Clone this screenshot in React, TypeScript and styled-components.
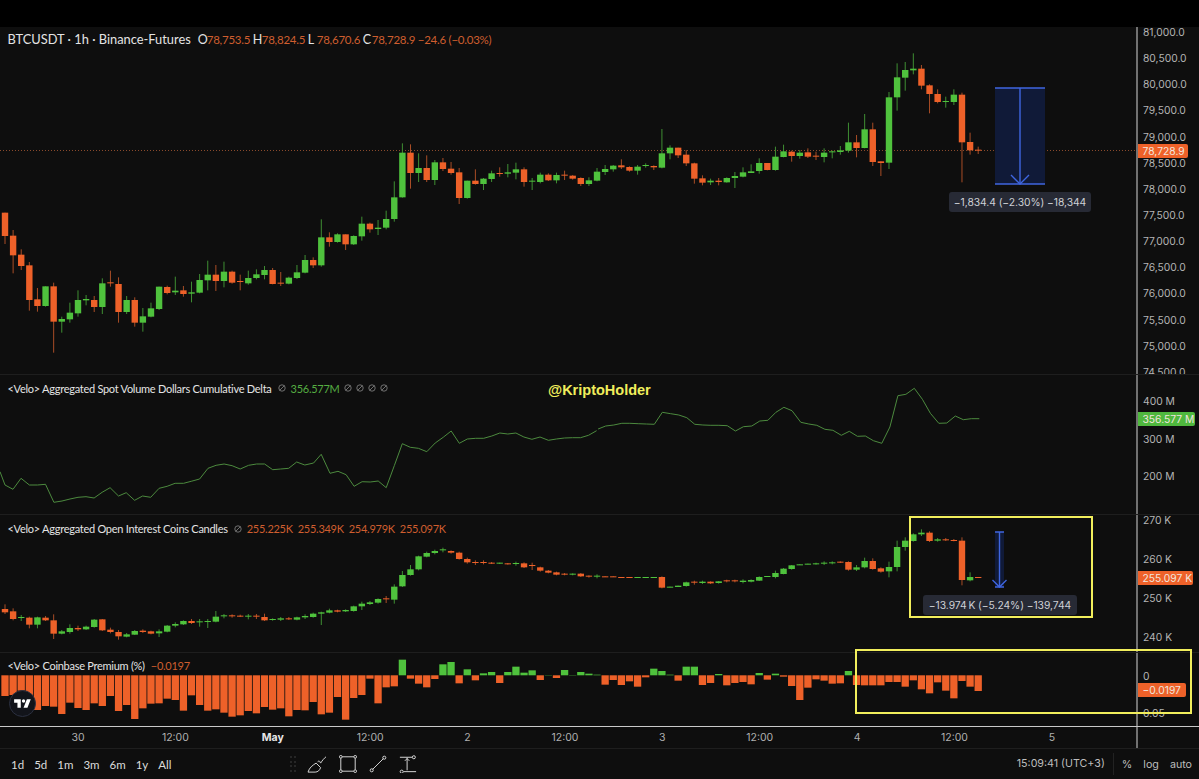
import React from 'react';
import styled, { createGlobalStyle } from 'styled-components';

const UP = '#4fc23d';
const DOWN = '#ee6129';
const UP_WICK = '#3f8f33';
const DOWN_WICK = '#a94d26';
const BLUE = '#3f66e0';
const YELLOW = '#f1ee5c';
const STEP = 8.11;
const FIRST_X = 5;

type Row = [number, number, number, number?, number?];
type Candle = { up: boolean; top: number; bottom: number; high: number; low: number };

// rows are [up, bodyTop, bodyBottom, wickTop, wickBottom] traced at 3x from `base`
const trace = (rows: Row[], base: number): Candle[] =>
    rows.map(([up, top, bottom, high = top, low = bottom]) => ({
        up: up === 1,
        top: base + top / 3,
        bottom: base + bottom / 3,
        high: base + high / 3,
        low: base + low / 3,
    }));

const priceCandles = [
    ...trace(
        [
            [0, 638, 708, 638, 732], [0, 707, 766, 690, 820], [0, 764, 798, 748, 810], [0, 796, 900, 786, 932],
            [0, 898, 918, 864, 935], [1, 859, 918, 859, 920], [0, 859, 965, 848, 1058], [1, 957, 965, 950, 998],
            [1, 938, 958, 908, 968], [1, 900, 940, 871, 950], [1, 897, 901, 885, 916], [0, 900, 921, 888, 936],
            [1, 850, 921, 835, 942], [0, 847, 850, 812, 860], [0, 852, 936, 832, 968], [1, 900, 936, 888, 942],
            [0, 900, 968, 892, 980], [1, 949, 968, 924, 995], [1, 925, 950, 908, 952], [1, 860, 927, 860, 930],
            [0, 861, 879, 857, 883], [1, 872, 877, 830, 885], [0, 871, 882, 858, 890], [1, 877, 881, 845, 907],
            [1, 840, 878, 822, 880], [1, 824, 841, 782, 871], [0, 824, 843, 795, 873], [1, 815, 843, 785, 862],
            [0, 815, 848, 812, 851], [0, 843, 845, 824, 871], [1, 834, 850, 812, 854], [1, 823, 834, 808, 838],
            [1, 810, 825, 798, 838], [0, 810, 852, 804, 853], [0, 848, 851, 816, 858], [1, 833, 851, 830, 853],
            [1, 817, 834, 795, 837], [1, 780, 818, 765, 820], [0, 780, 796, 772, 804], [1, 712, 796, 658, 800],
            [0, 712, 726, 697, 740], [1, 703, 726, 700, 728], [0, 703, 733, 703, 750], [1, 708, 733, 706, 735],
            [1, 671, 709, 650, 722], [0, 671, 688, 668, 698], [1, 683, 687, 660, 705], [1, 657, 683, 632, 688],
            [1, 592, 657, 544, 665], [1, 458, 592, 430, 593], [0, 458, 519, 433, 566],
        ],
        0,
    ),
    ...trace(
        [
            [1, 294, 309, 250, 336], [0, 294, 330, 256, 336], [1, 277, 330, 270, 345], [0, 277, 297, 264, 303],
            [0, 296, 309, 276, 314], [0, 307, 384, 294, 402], [1, 332, 384, 332, 386], [0, 332, 342, 298, 344],
            [1, 326, 342, 324, 360], [1, 310, 327, 302, 336], [0, 309, 312, 292, 320], [1, 307, 311, 282, 322],
            [1, 298, 308, 278, 328], [0, 298, 336, 292, 350], [1, 332, 335, 324, 360], [1, 314, 336, 308, 340],
            [0, 314, 331, 310, 333], [1, 315, 331, 308, 340], [0, 314, 317, 302, 330], [0, 317, 326, 315, 329],
            [0, 324, 342, 322, 348], [1, 331, 342, 322, 348], [1, 305, 332, 294, 334], [1, 297, 306, 285, 315],
            [1, 287, 298, 285, 305], [0, 286, 292, 268, 297], [0, 291, 302, 289, 305], [1, 290, 302, 285, 314],
            [1, 285, 288, 280, 293], [0, 288, 292, 286, 300], [1, 250, 293, 177, 295], [1, 233, 250, 226, 268],
            [0, 233, 256, 233, 264], [0, 254, 280, 240, 288], [0, 280, 326, 278, 341], [0, 325, 338, 316, 346],
            [1, 332, 337, 326, 345], [0, 332, 336, 324, 346], [1, 324, 337, 322, 338], [1, 318, 324, 306, 354],
            [1, 307, 320, 292, 322], [1, 304, 309, 283, 309], [1, 279, 303, 265, 311], [0, 279, 300, 279, 301],
            [1, 260, 300, 230, 302],
        ],
        70,
    ),
    ...trace(
        [
            [1, 334, 351, 314, 352], [0, 335, 348, 332, 365], [1, 338, 348, 330, 356], [0, 337, 350, 325, 354],
            [0, 347, 349, 335, 360], [1, 338, 351, 325, 367], [1, 334, 337, 332, 355], [1, 331, 336, 318, 344],
            [1, 307, 332, 248, 338], [0, 307, 324, 285, 352], [1, 268, 324, 222, 325], [0, 268, 366, 248, 378],
            [0, 364, 369, 364, 408], [1, 172, 368, 156, 387], [1, 112, 172, 70, 212], [1, 90, 113, 66, 152],
            [1, 86, 91, 40, 103], [0, 86, 137, 75, 148], [0, 136, 162, 133, 220], [0, 162, 186, 148, 190],
            [1, 183, 186, 170, 203], [1, 164, 186, 148, 195], [0, 164, 307, 158, 427], [0, 306, 331, 278, 344],
            [0, 329, 332, 320, 342],
        ],
        40,
    ),
];

const interestCandles = [
    ...trace(
        [
            [0, 282, 292, 268, 297], [0, 289, 312, 280, 316], [1, 306, 308, 300, 318], [0, 308, 329, 305, 340],
            [1, 307, 329, 305, 340], [0, 308, 316, 303, 318], [0, 316, 356, 298, 372], [1, 349, 356, 345, 358],
            [1, 339, 351, 328, 356], [0, 339, 343, 332, 348], [1, 335, 343, 332, 345], [1, 314, 336, 312, 338],
            [0, 313, 346, 312, 348], [0, 344, 351, 338, 355], [0, 351, 364, 345, 374], [1, 358, 365, 354, 367],
            [1, 348, 359, 345, 360], [0, 347, 351, 343, 354], [0, 349, 356, 347, 358], [1, 349, 355, 343, 366],
            [1, 332, 350, 330, 352], [1, 327, 332, 322, 337], [1, 318, 328, 316, 330], [0, 318, 324, 312, 327],
            [1, 319, 322, 312, 335], [1, 318, 321, 312, 339], [1, 305, 320, 288, 322], [1, 301, 304, 297, 310],
            [0, 301, 304, 298, 308], [0, 302, 304, 299, 306], [1, 302, 305, 297, 313], [0, 302, 304, 297, 312],
            [0, 306, 316, 296, 318], [1, 312, 315, 310, 317], [1, 310, 314, 306, 318], [0, 310, 313, 306, 315],
            [1, 307, 314, 305, 316], [1, 303, 307, 298, 312], [1, 296, 306, 293, 308], [1, 292, 296, 290, 330],
            [1, 286, 293, 281, 295], [0, 286, 290, 284, 292], [1, 285, 289, 283, 291], [1, 274, 288, 272, 290],
            [1, 266, 274, 260, 285], [1, 262, 267, 258, 270], [1, 252, 263, 250, 266], [0, 250, 252, 243, 264],
            [1, 215, 254, 208, 266], [1, 180, 214, 168, 216], [1, 163, 180, 150, 182], [1, 124, 163, 122, 166],
            [1, 114, 125, 110, 127], [1, 108, 114, 104, 118], [1, 103, 106, 98, 112], [0, 108, 113, 106, 116],
            [0, 113, 132, 110, 134], [0, 132, 142, 128, 146], [0, 141, 144, 136, 150], [0, 141, 143, 136, 148],
            [0, 143, 145, 141, 147], [1, 143, 145, 143, 147], [0, 145, 147, 144, 149], [1, 144, 147, 140, 152],
            [0, 145, 157, 142, 159], [0, 150, 153, 143, 165], [0, 157, 167, 155, 170], [0, 167, 173, 165, 175],
            [0, 172, 179, 170, 181], [0, 176, 179, 174, 181], [1, 176, 179, 175, 181], [0, 176, 184, 174, 186],
            [0, 182, 184, 181, 188], [1, 182, 185, 178, 190],
        ],
        515,
    ),
    ...trace(
        [
            [0, 199, 201], [0, 199, 201], [0, 201, 203], [0, 201, 203], [1, 201, 203], [1, 201, 203], [1, 201, 203],
            [0, 201, 233, 199, 235], [1, 230, 232], [1, 227, 231], [1, 217, 228, 215, 230], [0, 215, 218, 212, 224],
            [1, 215, 219, 212, 222], [0, 215, 220, 214, 222], [1, 214, 219, 213, 221], [0, 211, 214, 209, 217],
            [0, 211, 214, 209, 217], [1, 212, 216, 208, 220], [1, 210, 215, 208, 217], [1, 201, 212, 199, 213],
            [1, 198, 199], [1, 189, 201, 182, 205], [1, 176, 192, 174, 193], [1, 166, 177, 165, 179], [1, 163, 165],
            [1, 161, 163], [1, 160, 162, 158, 164], [1, 158, 161, 154, 165], [1, 157, 160, 154, 163],
            [0, 155, 157, 154, 159], [0, 156, 179, 154, 182], [1, 172, 179, 165, 183], [1, 153, 172, 143, 175],
            [0, 153, 177, 145, 179], [0, 175, 185, 172, 188], [1, 171, 184, 155, 202], [1, 111, 171, 92, 184],
            [1, 92, 111, 82, 122], [1, 73, 93, 70, 95], [1, 68, 73, 58, 78], [0, 68, 93, 64, 96], [1, 88, 92, 84, 95],
            [0, 88, 91, 84, 93], [0, 90, 92, 87, 94], [0, 92, 210, 82, 226], [1, 201, 211, 187, 214], [0, 201, 203],
        ],
        510,
    ),
];

// bar ends as traced at 3x: [up, end]
const premiumBars: [number, number][] = [
    [0, 138], [0, 135], [0, 122], [0, 150], [0, 180], [0, 168], [0, 170], [0, 192], [0, 158], [0, 174], [0, 180],
    [0, 160], [0, 168], [0, 138], [0, 183], [0, 165], [0, 207], [0, 175], [0, 161], [0, 160], [0, 146], [0, 150],
    [0, 182], [0, 136], [0, 165], [0, 182], [0, 178], [0, 188], [0, 200], [0, 196], [0, 183], [0, 190], [0, 171],
    [0, 179], [0, 175], [0, 199], [0, 180], [0, 181], [0, 156], [0, 193], [0, 188], [0, 141], [0, 209], [0, 144],
    [0, 135], [0, 86], [0, 160], [0, 112], [0, 109], [1, 29], [0, 86], [0, 101], [0, 112], [0, 87], [1, 43],
    [1, 36], [0, 100], [1, 58], [0, 91], [1, 70], [1, 66], [0, 99], [1, 66], [1, 50], [1, 68], [1, 61], [0, 90],
    [1, 75], [0, 84], [1, 60], [1, 75], [1, 66], [1, 71], [1, 74], [0, 104], [0, 90], [0, 105], [0, 94], [0, 110],
    [0, 82], [1, 56], [1, 63], [1, 74], [0, 92], [1, 50], [1, 50], [0, 105], [0, 99], [1, 72], [0, 106], [0, 99],
    [0, 96], [0, 103], [1, 69], [0, 89], [1, 71], [0, 80], [0, 108], [0, 150], [0, 113], [0, 88], [0, 92], [0, 101],
    [0, 100], [1, 63], [0, 105], [0, 106], [0, 106], [0, 106], [0, 96], [0, 96], [0, 110], [0, 91], [0, 118],
    [0, 130], [0, 97], [0, 122], [0, 145], [0, 93], [0, 110], [0, 123],
];

const deltaLeft =
    '0,305 13,345 34,358 55,325 77,345 98,345 119,343 141,397 162,393 183,387 204,382 225,380 246,384 267,367 288,353 310,378 330,368 352,391 373,378 394,382 416,355 437,349 458,340 480,340 500,334 522,327 544,295 565,286 586,282 607,287 628,297 650,286 671,282 692,282 713,299 734,297 755,295 776,276 797,285 820,279 840,253 863,310 884,304 905,314 926,349 947,335 968,336 989,333 1010,353 1031,287 1052,221 1073,232 1094,235 1116,245 1138,219 1159,202 1180,183 1201,220 1222,207 1244,205 1265,205 1286,198 1307,189 1328,192 1349,189 1370,201 1391,208 1412,201 1434,211 1455,207 1476,204 1497,203 1518,203 1539,196 1560,182';
const deltaRight =
    '-5,177 15,168 36,165 57,160 78,160 100,161 121,162 142,163 163,127 185,131 206,135 227,143 248,163 269,165 290,166 311,166 333,167 354,183 375,170 397,168 418,153 439,151 460,127 481,112 502,122 525,157 546,162 567,166 588,178 609,181 631,196 652,184 673,199 694,198 715,212 737,220 758,171 779,77 800,73 822,55 843,88 864,130 886,160 907,159 929,138 950,149 971,146 992,146';

const toPoints = (raw: string, left: number, top: number) =>
    raw
        .split(' ')
        .map((pair) => {
            const [x, y] = pair.split(',').map(Number);
            return `${(left + x / 2.615).toFixed(1)},${(y / 3 - top).toFixed(1)}`;
        })
        .join(' ');

const GlobalStyle = createGlobalStyle`
    html, body {
        margin: 0;
        background: #000;
    }
`;

const Screen = styled.div`
    position: relative;
    width: 1199px;
    height: 779px;
    overflow: hidden;
    display: flex;
    flex-direction: column;
    background: #0e0e0e;
    font-family: 'Inter', 'Liberation Sans', sans-serif;
`;

const TopBand = styled.div`
    height: 27px;
    background: #000;
`;

const Pane = styled.div<{ $height: number; $last?: boolean }>`
    height: ${(p) => p.$height}px;
    display: flex;
    box-sizing: border-box;
    border-bottom: ${(p) => (p.$last ? 'none' : '1px solid #1e1e1e')};
`;

const Plot = styled.div`
    position: relative;
    flex: 1;
    min-width: 0;
`;

const Drawing = styled.svg`
    display: block;
    width: 1136px;
    height: 100%;
`;

const Legend = styled.div<{ $top: number; $size?: number; $spacing?: number }>`
    position: absolute;
    left: 7.5px;
    top: ${(p) => p.$top}px;
    display: flex;
    align-items: center;
    height: 16px;
    white-space: nowrap;
    font-family: 'Lato', 'Liberation Sans', sans-serif;
    font-size: ${(p) => p.$size ?? 11}px;
    letter-spacing: ${(p) => p.$spacing ?? -0.27}px;
    color: #e4e4e4;
`;

const Quote = styled.span`
    width: 55px;
    flex: none;
    display: flex;
    align-items: center;
    letter-spacing: 0;
    font-size: 12.5px;
`;

const QuoteFirst = styled(Quote)`
    margin-left: 7px;
`;

const QuoteLabel = styled.span`
    width: 9px;
    flex: none;
`;

const LegendValue = styled.span<{ $tone: 'up' | 'down'; $gap?: number; $small?: boolean }>`
    margin-left: ${(p) => p.$gap ?? 0}px;
    color: ${(p) => (p.$tone === 'up' ? '#55ad42' : '#cf5e2f')};
    ${(p) => (p.$small ? 'font-size: 11.5px; letter-spacing: -0.25px;' : '')}
`;

const NaMark = styled.svg<{ $gap: number }>`
    width: 8px;
    height: 8px;
    margin-left: ${(p) => p.$gap}px;
    flex: none;
`;

const PriceAxis = styled.div`
    position: relative;
    width: 63px;
    flex: none;
    box-sizing: border-box;
    border-left: 2px solid #717171;
    overflow: hidden;
`;

const TickList = styled.div<{ $row: number; $offset: number }>`
    display: flex;
    flex-direction: column;
    margin-top: ${(p) => p.$offset}px;
    padding-left: 5px;

    span {
        height: ${(p) => p.$row}px;
        line-height: ${(p) => p.$row}px;
        flex: none;
        font-size: 10.3px;
        color: #b5b5b5;
    }
`;

const PriceTag = styled.div<{ $top: number; $width: number; $bg: string }>`
    position: absolute;
    left: 0;
    top: ${(p) => p.$top}px;
    width: ${(p) => p.$width}px;
    height: 14px;
    line-height: 14px;
    box-sizing: border-box;
    padding-left: 4.5px;
    border-radius: 0 2px 2px 0;
    background: ${(p) => p.$bg};
    font-size: 10.3px;
    color: #f2e6df;
    white-space: nowrap;
`;

const MeasureLabel = styled.div<{ $left: number; $top: number; $width: number }>`
    position: absolute;
    left: ${(p) => p.$left}px;
    top: ${(p) => p.$top}px;
    width: ${(p) => p.$width}px;
    height: 20px;
    line-height: 20px;
    text-align: center;
    border-radius: 3px;
    background: #272a35;
    font-size: 10.3px;
    letter-spacing: -0.05px;
    color: #cfd1d6;
    white-space: nowrap;
`;

const Watermark = styled.div`
    position: absolute;
    left: 548px;
    top: 7px;
    font-family: 'Liberation Sans', sans-serif;
    font-size: 14.5px;
    font-weight: 700;
    color: ${YELLOW};
`;

const HighlightBox = styled.div<{ $left: number; $top: number; $width: number; $height: number }>`
    position: absolute;
    left: ${(p) => p.$left}px;
    top: ${(p) => p.$top}px;
    width: ${(p) => p.$width}px;
    height: ${(p) => p.$height}px;
    box-sizing: border-box;
    border: 2px solid ${YELLOW};
    pointer-events: none;
`;

const LogoBadge = styled.div`
    position: absolute;
    left: 9px;
    top: 37px;
    width: 27px;
    height: 27px;
    box-sizing: border-box;
    display: flex;
    align-items: center;
    justify-content: center;
    border-radius: 50%;
    background: #12141a;
    border: 1px solid #2b3040;

    svg {
        width: 20px;
    }
`;

const TimeAxis = styled.div`
    height: 23px;
    display: flex;
    box-sizing: border-box;
    border-top: 1.5px solid #c9c9c9;
    border-bottom: 1px solid #1e1e1e;
`;

const TimeTicks = styled.div`
    flex: 1;
    display: grid;
    grid-template-columns: repeat(11, 97.4px);
    padding-left: 29.3px;
    align-items: center;
`;

const TimeTick = styled.span<{ $strong?: boolean }>`
    text-align: center;
    font-size: 10.5px;
    font-weight: ${(p) => (p.$strong ? 700 : 400)};
    color: ${(p) => (p.$strong ? '#e6e6e6' : '#b0b0b0')};
`;

const AxisCorner = styled.div`
    width: 63px;
    flex: none;
    box-sizing: border-box;
    border-left: 2px solid #717171;
`;

const BottomBar = styled.div`
    flex: 1;
    display: flex;
    align-items: center;
    padding: 0 7px 0 11px;
    font-family: 'Lato', 'Liberation Sans', sans-serif;
    color: #dcdcdc;
`;

const Ranges = styled.div`
    display: flex;
    gap: 10px;
    width: 279px;
    font-size: 11.5px;
`;

const Grip = styled.div`
    display: grid;
    grid-template-columns: repeat(2, 2px);
    gap: 2.5px 2px;
    margin-right: 11px;

    i {
        width: 2px;
        height: 2px;
        background: #262626;
    }
`;

const ToolIcons = styled.div`
    display: flex;
    align-items: center;
    gap: 12px;

    svg {
        display: block;
        height: 18px;
        fill: none;
        stroke: #d6d6d6;
        stroke-width: 1.1;
    }
`;

const Status = styled.div`
    margin-left: auto;
    display: flex;
    align-items: center;
    font-family: 'Inter', 'Liberation Sans', sans-serif;
    font-size: 10.7px;
    color: #bdbdbd;
`;

const Clock = styled.span`
    padding-right: 8px;
    margin-right: 8px;
    border-right: 1px solid #222;
    line-height: 22px;
`;

const StatusItem = styled.span`
    margin-right: 11px;

    &:last-child {
        margin-right: 0;
    }
`;

const CandleSeries = ({ candles, paneTop }: { candles: Candle[]; paneTop: number }) => (
    <>
        {candles.map((c, i) => {
            const x = FIRST_X + STEP * i;
            return (
                <g key={i}>
                    <line
                        x1={x}
                        x2={x}
                        y1={c.high - paneTop}
                        y2={c.low - paneTop}
                        stroke={c.up ? UP_WICK : DOWN_WICK}
                        strokeWidth={1}
                    />
                    <rect
                        x={x - 3.2}
                        y={c.top - paneTop}
                        width={6.4}
                        height={Math.max(c.bottom - c.top, 1)}
                        fill={c.up ? UP : DOWN}
                    />
                </g>
            );
        })}
    </>
);

const NaIcon = ({ gap }: { gap: number }) => (
    <NaMark $gap={gap} viewBox="0 0 8 8" fill="none" stroke="#7a7a7a" strokeWidth="0.9">
        <circle cx="4" cy="4" r="3.2" />
        <path d="M1.6 6.4 6.4 1.6" />
    </NaMark>
);

const Measure = ({
    left,
    right,
    top,
    bottom,
    wing,
}: {
    left: number;
    right: number;
    top: number;
    bottom: number;
    wing: number;
}) => {
    const mid = (left + right) / 2;
    return (
        <g stroke={BLUE} strokeWidth="1.4" fill="none">
            <rect x={left} y={top} width={right - left} height={bottom - top} fill="#101a38" stroke="none" />
            <path d={`M${left} ${top}H${right}M${left} ${bottom}H${right}M${mid} ${top}V${bottom}`} />
            <path d={`M${mid - wing} ${bottom - wing}L${mid} ${bottom}L${mid + wing} ${bottom - wing}`} />
        </g>
    );
};

const OHLC = [
    ['O', '78,753.5'],
    ['H', '78,824.5'],
    ['L', '78,670.6'],
    ['C', '78,728.9'],
];

const PRICE_TICKS = [
    '81,000.0', '80,500.0', '80,000.0', '79,500.0', '79,000.0', '78,500.0', '78,000.0',
    '77,500.0', '77,000.0', '76,500.0', '76,000.0', '75,500.0', '75,000.0', '74,500.0',
];

const App = () => {
    const baseline = 675.3 - 653;
    return (
        <Screen>
            <GlobalStyle />
            <TopBand />

            <Pane $height={348}>
                <Plot>
                    <Drawing>
                        <line x1="0" x2="1136" y1="123.5" y2="123.5" stroke="#8a4a2c" strokeDasharray="1 2" />
                        <Measure left={995} right={1045} top={61} bottom={157} wing={9} />
                        <CandleSeries candles={priceCandles} paneTop={27} />
                    </Drawing>
                    <Legend $top={4} $size={12.85} $spacing={0}>
                        BTCUSDT · 1h · Binance-Futures
                        {OHLC.map(([label, value], i) => {
                            const Cell = i === 0 ? QuoteFirst : Quote;
                            return (
                                <Cell key={label}>
                                    <QuoteLabel>{label}</QuoteLabel>
                                    <LegendValue $tone="down" $small>{value}</LegendValue>
                                </Cell>
                            );
                        })}
                        <LegendValue $tone="down" $small>−24.6 (−0.03%)</LegendValue>
                    </Legend>
                    <MeasureLabel $left={949} $top={165} $width={142}>
                        −1,834.4 (−2.30%) −18,344
                    </MeasureLabel>
                </Plot>
                <PriceAxis>
                    <TickList $row={26.15} $offset={-8}>
                        {PRICE_TICKS.map((t) => (
                            <span key={t}>{t}</span>
                        ))}
                    </TickList>
                    <PriceTag $top={117} $width={50} $bg={DOWN}>78,728.9</PriceTag>
                </PriceAxis>
            </Pane>

            <Pane $height={140}>
                <Plot>
                    <Drawing>
                        <g fill="none" stroke="#4c8a3e" strokeWidth="1">
                            <polyline points={toPoints(deltaLeft, 0, 5)} />
                            <polyline points={toPoints(deltaRight, 600, 5)} />
                        </g>
                    </Drawing>
                    <Legend $top={5}>
                        {'<Velo> Aggregated Spot Volume Dollars Cumulative Delta'}
                        <NaIcon gap={6} />
                        <LegendValue $tone="up" $gap={5}>356.577M</LegendValue>
                        <NaIcon gap={4} />
                        <NaIcon gap={4} />
                        <NaIcon gap={4} />
                        <NaIcon gap={4} />
                    </Legend>
                    <Watermark>@KriptoHolder</Watermark>
                </Plot>
                <PriceAxis>
                    <TickList $row={37.5} $offset={8.25}>
                        <span>400 M</span>
                        <span>300 M</span>
                        <span>200 M</span>
                    </TickList>
                    <PriceTag $top={37} $width={57} $bg="#4fb83e">356.577 M</PriceTag>
                </PriceAxis>
            </Pane>

            <Pane $height={138}>
                <Plot>
                    <Drawing>
                        <Measure left={995} right={1004} top={17} bottom={72} wing={7} />
                        <CandleSeries candles={interestCandles} paneTop={515} />
                    </Drawing>
                    <Legend $top={5.5}>
                        {'<Velo> Aggregated Open Interest Coins Candles'}
                        <NaIcon gap={6} />
                        <LegendValue $tone="down" $gap={5}>255.225K</LegendValue>
                        <LegendValue $tone="down" $gap={5}>255.349K</LegendValue>
                        <LegendValue $tone="down" $gap={5}>254.979K</LegendValue>
                        <LegendValue $tone="down" $gap={5}>255.097K</LegendValue>
                    </Legend>
                    <MeasureLabel $left={923} $top={80} $width={154}>
                        −13.974{'\u202F'}K (−5.24%) −139,744
                    </MeasureLabel>
                </Plot>
                <PriceAxis>
                    <TickList $row={39} $offset={-14.5}>
                        <span>270 K</span>
                        <span>260 K</span>
                        <span>250 K</span>
                        <span>240 K</span>
                    </TickList>
                    <PriceTag $top={56} $width={55} $bg={DOWN}>255.097 K</PriceTag>
                </PriceAxis>
            </Pane>

            <Pane $height={73} $last>
                <Plot>
                    <Drawing>
                        {premiumBars.map(([up, end], i) => {
                            const y = 650 + end / 3 - 653;
                            return (
                                <rect
                                    key={i}
                                    x={FIRST_X + STEP * i - 3.65}
                                    y={Math.min(y, baseline)}
                                    width={7.3}
                                    height={Math.abs(y - baseline)}
                                    fill={up ? UP : DOWN}
                                />
                            );
                        })}
                    </Drawing>
                    <Legend $top={4}>
                        {'<Velo> Coinbase Premium (%)'}
                        <LegendValue $tone="down" $gap={6}>−0.0197</LegendValue>
                    </Legend>
                    <LogoBadge>
                        <svg viewBox="0 0 36 28" fill="#fff">
                            <path d="M14 6H2v6h6v9h6V6Zm12 15h-7l6-15h7l-6 15Zm-7-9a3 3 0 1 0 0-6 3 3 0 0 0 0 6Z" />
                        </svg>
                    </LogoBadge>
                </Plot>
                <PriceAxis>
                    <TickList $row={37} $offset={4.5}>
                        <span>0</span>
                        <span>0.05</span>
                    </TickList>
                    <PriceTag $top={30} $width={48} $bg={DOWN}>−0.0197</PriceTag>
                </PriceAxis>
            </Pane>

            <TimeAxis>
                <TimeTicks>
                    <TimeTick>30</TimeTick>
                    <TimeTick>12:00</TimeTick>
                    <TimeTick $strong>May</TimeTick>
                    <TimeTick>12:00</TimeTick>
                    <TimeTick>2</TimeTick>
                    <TimeTick>12:00</TimeTick>
                    <TimeTick>3</TimeTick>
                    <TimeTick>12:00</TimeTick>
                    <TimeTick>4</TimeTick>
                    <TimeTick>12:00</TimeTick>
                    <TimeTick>5</TimeTick>
                </TimeTicks>
                <AxisCorner />
            </TimeAxis>

            <BottomBar>
                <Ranges>
                    <span>1d</span>
                    <span>5d</span>
                    <span>1m</span>
                    <span>3m</span>
                    <span>6m</span>
                    <span>1y</span>
                    <span>All</span>
                </Ranges>
                <Grip>
                    <i /><i /><i /><i /><i /><i /><i /><i />
                </Grip>
                <ToolIcons>
                    <svg viewBox="0 0 22 20" width="20">
                        <path d="M1 19C2.5 14 6 11.5 10 9l5 5c-1 3-3 5-6 5H1Z" />
                        <path d="M12 8c1-3 2-1 3 1 2-3 3.5-5 6-7" />
                    </svg>
                    <svg viewBox="0 0 20 20" width="18">
                        <path d="M3.5 2H16.5M18 3.5V16.5M16.5 18H3.5M2 16.5V3.5" />
                        <circle cx="2" cy="2" r="1.5" />
                        <circle cx="18" cy="2" r="1.5" />
                        <circle cx="18" cy="18" r="1.5" />
                        <circle cx="2" cy="18" r="1.5" />
                    </svg>
                    <svg viewBox="0 0 20 20" width="18">
                        <path d="M4 16 16 4" />
                        <circle cx="3" cy="17" r="1.7" />
                        <circle cx="17" cy="3" r="1.7" />
                    </svg>
                    <svg viewBox="0 0 20 20" width="18">
                        <path d="M1 2.5H14.5M9 3V17M6.5 6.5 9 4l2.5 2.5M5 18.5H19" />
                        <circle cx="16.5" cy="2.5" r="1.7" />
                        <circle cx="3" cy="18.5" r="1.7" />
                    </svg>
                </ToolIcons>
                <Status>
                    <Clock>15:09:41 (UTC+3)</Clock>
                    <StatusItem>%</StatusItem>
                    <StatusItem>log</StatusItem>
                    <StatusItem>auto</StatusItem>
                </Status>
            </BottomBar>

            <HighlightBox $left={909} $top={516} $width={184} $height={102} />
            <HighlightBox $left={855} $top={649} $width={337} $height={65} />
        </Screen>
    );
};

export default App;
